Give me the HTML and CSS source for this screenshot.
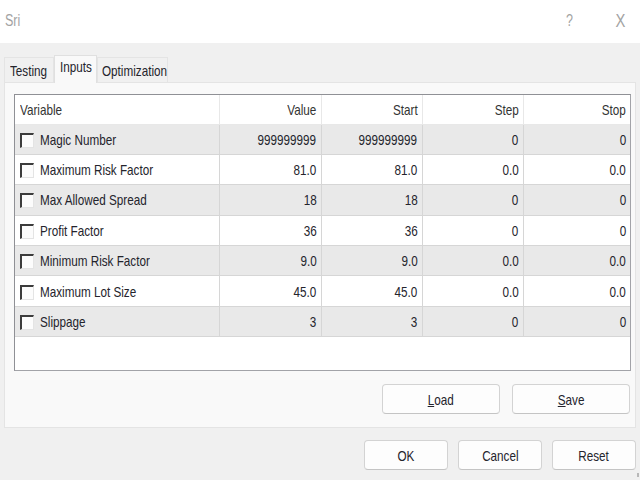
FILE: index.html
```html
<!DOCTYPE html>
<html lang="en">
    <head>
        <meta charset="UTF-8" />
        <title>Sri</title>
        <link rel="stylesheet" href="styles.css">
    </head>
    <body>
        <div class="titlebar">
            <span class="title"><span class="l">Sri</span></span>
            <span class="tb_btn"><span class="c">?</span></span>
            <span class="tb_btn tb_close"><span class="c">X</span></span>
        </div>
        <div class="dialog">
            <div class="tabs">
                <div class="tab t_testing"><span class="l">Testing</span></div>
                <div class="tab tab_active t_inputs"><span class="l">Inputs</span></div>
                <div class="tab t_optim"><span class="l">Optimization</span></div>
            </div>
            <div class="panel">
                <div class="grid_box">
                    <table class="grid">
                        <colgroup>
                            <col class="c_var"><col class="c_val"><col class="c_num"><col class="c_num"><col class="c_last">
                        </colgroup>
                        <tr class="head">
                            <th class="left"><span class="l">Variable</span></th>
                            <th><span class="n">Value</span></th>
                            <th><span class="n">Start</span></th>
                            <th><span class="n">Step</span></th>
                            <th><span class="n">Stop</span></th>
                        </tr>
                        <tr class="odd">
                            <td class="left"><span class="chk"></span><span class="l">Magic Number</span></td>
                            <td><span class="n">999999999</span></td><td><span class="n">999999999</span></td>
                            <td><span class="n">0</span></td><td><span class="n">0</span></td>
                        </tr>
                        <tr>
                            <td class="left"><span class="chk"></span><span class="l">Maximum Risk Factor</span></td>
                            <td><span class="n">81.0</span></td><td><span class="n">81.0</span></td>
                            <td><span class="n">0.0</span></td><td><span class="n">0.0</span></td>
                        </tr>
                        <tr class="odd">
                            <td class="left"><span class="chk"></span><span class="l">Max Allowed Spread</span></td>
                            <td><span class="n">18</span></td><td><span class="n">18</span></td>
                            <td><span class="n">0</span></td><td><span class="n">0</span></td>
                        </tr>
                        <tr>
                            <td class="left"><span class="chk"></span><span class="l">Profit Factor</span></td>
                            <td><span class="n">36</span></td><td><span class="n">36</span></td>
                            <td><span class="n">0</span></td><td><span class="n">0</span></td>
                        </tr>
                        <tr class="odd">
                            <td class="left"><span class="chk"></span><span class="l">Minimum Risk Factor</span></td>
                            <td><span class="n">9.0</span></td><td><span class="n">9.0</span></td>
                            <td><span class="n">0.0</span></td><td><span class="n">0.0</span></td>
                        </tr>
                        <tr>
                            <td class="left"><span class="chk"></span><span class="l">Maximum Lot Size</span></td>
                            <td><span class="n">45.0</span></td><td><span class="n">45.0</span></td>
                            <td><span class="n">0.0</span></td><td><span class="n">0.0</span></td>
                        </tr>
                        <tr class="odd">
                            <td class="left"><span class="chk"></span><span class="l">Slippage</span></td>
                            <td><span class="n">3</span></td><td><span class="n">3</span></td>
                            <td><span class="n">0</span></td><td><span class="n">0</span></td>
                        </tr>
                    </table>
                </div>
                <div class="panel_buttons">
                    <button class="btn btn_wide"><span class="c"><u>L</u>oad</span></button>
                    <button class="btn btn_wide"><span class="c"><u>S</u>ave</span></button>
                </div>
            </div>
            <div class="footer">
                <button class="btn"><span class="c">OK</span></button>
                <button class="btn"><span class="c">Cancel</span></button>
                <button class="btn"><span class="c">Reset</span></button>
            </div>
            <div class="grip"></div>
        </div>
    </body>
</html>
```

FILE: styles.css
```css
html, body {
    margin: 0;
    width: 640px;
    height: 480px;
    overflow: hidden;
}
* {
    font-family: "Liberation Sans", Arial, sans-serif;
    font-size: 15px;
    color: #24242c;
    box-sizing: border-box;
}
/* narrow text: squeeze the glyphs, anchored on the side they align to */
.l, .n, .c {
    display: inline-block;
    transform: scaleX(0.78);
    white-space: nowrap;
}
.l { transform-origin: left center; }
.n { transform-origin: right center; }
.c { transform-origin: center center; }

.titlebar {
    height: 43px;
    background-color: #fff;
    display: flex;
    align-items: center;
    padding: 0 10px 2px 5px;
}
.title {
    flex: 1;
}
.title span, .tb_btn span {
    font-size: 16px;
    color: #a3a3a3;
}
.tb_btn {
    width: 24px;
    text-align: center;
}
.tb_close {
    width: 20px;
    margin-left: 29px;
}
.tb_close span { font-size: 19px; }
.dialog {
    position: relative;
    height: 437px;
    background-color: #f0f0f0;
    padding-top: 12px;
}
.tabs {
    display: flex;
    align-items: flex-end;
    height: 27px;
    padding-left: 4px;
}
.tab {
    height: 25px;
    line-height: 26px;
    padding-left: 5px;
    border: 1px solid #e4e4e4;
    border-bottom: none;
    background-color: #f0f0f0;
    overflow: hidden;
}
.t_testing { width: 50px; }
.t_inputs { width: 43px; }
.t_optim { width: 71px; padding-left: 4px; }
.tab_active {
    height: 28px;
    line-height: 22px;
    margin-bottom: -1px;
    background-color: #f9f9f9;
    border-color: #e0e0e0;
    position: relative;
}
.panel {
    margin: 0 4px;
    height: 346px;
    background-color: #f9f9f9;
    border: 1px solid #e4e4e4;
    padding: 11px 4px 0 9px;
}
.grid_box {
    height: 277px;
    background-color: #fff;
    border: 1px solid #a2a3a8;
    border-top-color: #8f9095;
    border-left-color: #8f9095;
}
.grid {
    width: 100%;
    border-collapse: collapse;
    table-layout: fixed;
}
.c_var { width: 204px; }
.c_val { width: 102px; }
.c_num { width: 101px; }
.grid th, .grid td {
    height: 30.4px;
    padding: 0 4px 0 5px;
    text-align: right;
    font-weight: normal;
    white-space: nowrap;
    border-right: 1px solid #d6d6d6;
    border-bottom: 1px solid #d6d6d6;
}
.grid th {
    height: 29px;
    border-right-color: #e8e8e8;
    border-bottom-color: #e8e8e8;
}
.grid th span { color: #333; }
.grid th:last-child, .grid td:last-child { border-right: none; }
.grid .left { text-align: left; }
.odd td { background-color: #e9e9e9; }
.chk {
    display: inline-block;
    width: 14px;
    height: 15px;
    vertical-align: -3px;
    margin-right: 6px;
    background-color: #fcfcfc;
    border-top: 2px solid #3c3c3c;
    border-left: 2px solid #3c3c3c;
    border-right: 1px solid #e4e4e4;
    border-bottom: 1px solid #e4e4e4;
}
.panel_buttons {
    display: flex;
    justify-content: flex-end;
    gap: 12px;
    margin-top: 13px;
    padding-right: 1px;
}
.btn {
    width: 84px;
    height: 30px;
    background-color: #fdfdfd;
    border: 1px solid #d3d3d3;
    border-bottom-color: #c4c4c4;
    border-radius: 4px;
    padding: 0;
}
.btn_wide { width: 118px; }
.btn u { text-decoration: underline; }
.footer {
    display: flex;
    justify-content: flex-end;
    gap: 10px;
    margin-top: 12px;
    padding-right: 4px;
}
.grip {
    position: absolute;
    right: 1px;
    bottom: 3px;
    width: 4px;
    height: 4px;
    border-right: 2px dotted #b8b8b8;
}
```
